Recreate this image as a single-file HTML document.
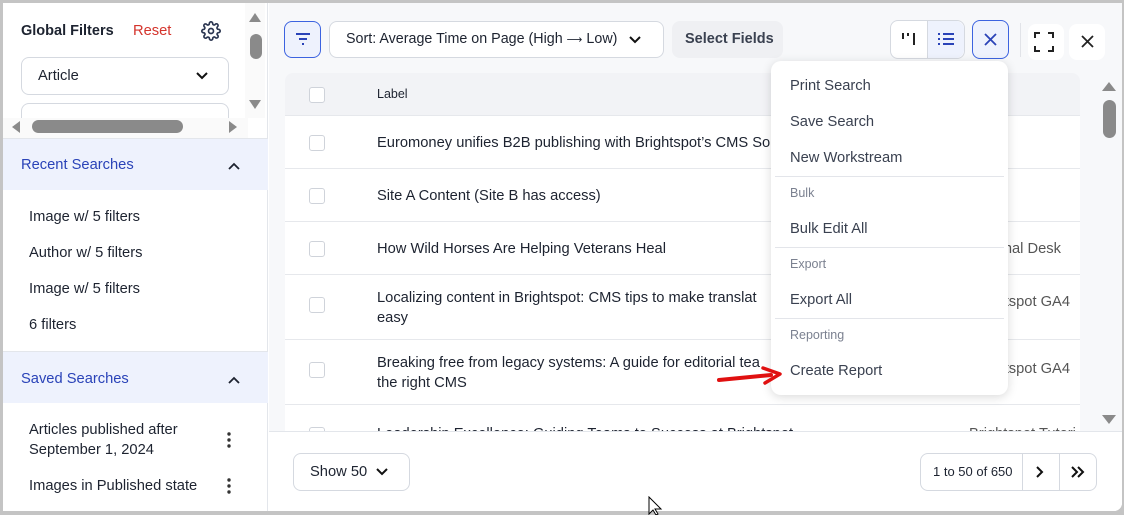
<!DOCTYPE html>
<html><head><meta charset="utf-8"><style>
*{box-sizing:border-box;margin:0;padding:0}
body{width:1124px;height:515px;background:#c4c4c4;font-family:"Liberation Sans","Noto Sans CJK JP",sans-serif;color:#1d2330;position:relative;overflow:hidden;font-size:14px;line-height:20px}
.win{position:absolute;left:3px;top:3px;width:1119px;height:508px;background:#fff;border-radius:0 0 8px 0;overflow:hidden}
.a{position:absolute}
.side{left:0;top:0;width:265px;height:508px;background:#fff;border-right:1px solid #e3e6eb}
.main{left:266px;top:0;width:853px;height:428px;background:#f7f8fa}
.sec{background:#eef2fd;color:#2a43b8;font-size:14.7px}
.item{font-size:14.7px;color:#1d2330}
.btn{border:1px solid #d5d9e0;border-radius:8px;background:#fff}
.cb{width:16px;height:16px;border:1px solid #cfd3da;border-radius:3px;background:#fff}
.row{left:282px;width:795px;border-top:1px solid #e6e8ec;background:#fff}
.rt{font-size:14.7px;color:#1d2330;line-height:20px}
.rr{position:absolute;right:10px;font-size:14.7px;color:#555}
.menu{left:768px;top:58px;width:237px;height:334px;background:#fff;border-radius:10px;box-shadow:0 2px 10px rgba(0,0,0,.15)}
.mi{position:absolute;left:19px;font-size:14.7px;color:#3a4150}
.mh{position:absolute;left:19px;font-size:12.5px;color:#7b8190}
.hr{position:absolute;left:4px;width:229px;height:1px;background:#e3e5ea}
</style></head><body>
<div class="win">
 <div class="a side">
  <div class="a" style="left:18px;top:18px;font-weight:bold;font-size:14.5px">Global Filters</div>
  <div class="a" style="left:130px;top:18px;color:#d4342c;font-size:14.7px">Reset</div>
  <svg class="a" style="left:198px;top:18px" width="20" height="20" viewBox="0 0 24 24" fill="none" stroke="#2a3550" stroke-width="2"><circle cx="12" cy="12" r="3"/><path d="M19.4 15a1.7 1.7 0 0 0 .3 1.8l.1.1a2 2 0 1 1-2.8 2.8l-.1-.1a1.7 1.7 0 0 0-1.8-.3 1.7 1.7 0 0 0-1 1.5V21a2 2 0 1 1-4 0v-.1a1.7 1.7 0 0 0-1.1-1.5 1.7 1.7 0 0 0-1.8.3l-.1.1a2 2 0 1 1-2.8-2.8l.1-.1a1.7 1.7 0 0 0 .3-1.8 1.7 1.7 0 0 0-1.5-1H3a2 2 0 1 1 0-4h.1a1.7 1.7 0 0 0 1.5-1.1 1.7 1.7 0 0 0-.3-1.8l-.1-.1a2 2 0 1 1 2.8-2.8l.1.1a1.7 1.7 0 0 0 1.8.3H9a1.7 1.7 0 0 0 1-1.5V3a2 2 0 1 1 4 0v.1a1.7 1.7 0 0 0 1 1.5 1.7 1.7 0 0 0 1.8-.3l.1-.1a2 2 0 1 1 2.8 2.8l-.1.1a1.7 1.7 0 0 0-.3 1.8V9a1.7 1.7 0 0 0 1.5 1H21a2 2 0 1 1 0 4h-.1a1.7 1.7 0 0 0-1.5 1z"/></svg>
  <div class="a btn" style="left:18px;top:54px;width:208px;height:38px"></div>
  <div class="a" style="left:35px;top:63px;font-size:14.7px">Article</div>
  <svg class="a" style="left:192px;top:68px" width="14" height="10" viewBox="0 0 14 10"><path d="M2 2l5 5 5-5" fill="none" stroke="#111" stroke-width="2"/></svg>
  <div class="a btn" style="left:18px;top:100px;width:208px;height:30px;border-bottom:none;border-radius:8px 8px 0 0"></div>
  <div class="a" style="left:0;top:115px;width:245px;height:22px;background:#fafafa"></div>
  <div class="a" style="left:242px;top:0;width:20px;height:115px;background:#fafafa"></div>
  <svg class="a" style="left:245px;top:8px" width="14" height="12"><path d="M1 11L7 2l6 9z" fill="#8a8a8a"/></svg>
  <div class="a" style="left:247px;top:31px;width:12px;height:25px;border-radius:6px;background:#8a8a8a"></div>
  <svg class="a" style="left:245px;top:96px" width="14" height="12"><path d="M1 1l6 9 6-9z" fill="#8a8a8a"/></svg>
  <svg class="a" style="left:8px;top:117px" width="10" height="14"><path d="M9 1L1 7l8 6z" fill="#8a8a8a"/></svg>
  <div class="a" style="left:29px;top:117px;width:151px;height:13px;border-radius:7px;background:#8a8a8a"></div>
  <svg class="a" style="left:225px;top:117px" width="10" height="14"><path d="M1 1l8 6-8 6z" fill="#8a8a8a"/></svg>
  <div class="a sec" style="left:0;top:135px;width:265px;height:52px;border-top:1px solid #e3e6eb"><div class="a" style="left:18px;top:16px">Recent Searches</div>
   <svg class="a" style="left:224px;top:22px" width="14" height="10"><path d="M2 8l5-5 5 5" fill="none" stroke="#1d2330" stroke-width="1.8"/></svg></div>
  <div class="a item" style="left:26px;top:204px">Image w/ 5 filters</div>
  <div class="a item" style="left:26px;top:240px">Author w/ 5 filters</div>
  <div class="a item" style="left:26px;top:276px">Image w/ 5 filters</div>
  <div class="a item" style="left:26px;top:312px">6 filters</div>
  <div class="a sec" style="left:0;top:348px;width:265px;height:52px;border-top:1px solid #e3e6eb"><div class="a" style="left:18px;top:17px">Saved Searches</div>
   <svg class="a" style="left:224px;top:23px" width="14" height="10"><path d="M2 8l5-5 5 5" fill="none" stroke="#1d2330" stroke-width="1.8"/></svg></div>
  <div class="a item" style="left:26px;top:417px;line-height:20px">Articles published after<br>September 1, 2024</div>
  <div class="a item" style="left:26px;top:473px">Images in Published state</div>
  <svg class="a" style="left:224px;top:429px" width="4" height="16"><circle cx="2" cy="2" r="1.7" fill="#333"/><circle cx="2" cy="8" r="1.7" fill="#333"/><circle cx="2" cy="14" r="1.7" fill="#333"/></svg>
  <svg class="a" style="left:224px;top:475px" width="4" height="16"><circle cx="2" cy="2" r="1.7" fill="#333"/><circle cx="2" cy="8" r="1.7" fill="#333"/><circle cx="2" cy="14" r="1.7" fill="#333"/></svg>
 </div>
 <div class="a main"></div>
 <!-- toolbar -->
 <div class="a" style="left:281px;top:18px;width:37px;height:37px;border:1px solid #3c63e0;border-radius:8px;background:#eef2fd"></div>
 <svg class="a" style="left:291px;top:28px" width="18" height="16"><path d="M2 3h14M5 8h8M8 13h2" stroke="#2a43b8" stroke-width="2"/></svg>
 <div class="a btn" style="left:326px;top:18px;width:335px;height:37px"></div>
 <div class="a" style="left:343px;top:26px;font-size:14.3px;white-space:nowrap">Sort: Average Time on Page (High <span style="font-family:'DejaVu Sans';font-size:11px">⟶</span> Low)</div>
 <svg class="a" style="left:625px;top:32px" width="14" height="10"><path d="M2 2l5 5 5-5" fill="none" stroke="#111" stroke-width="2"/></svg>
 <div class="a" style="left:669px;top:18px;width:111px;height:37px;border-radius:8px;background:#eff0f3"></div>
 <div class="a" style="left:682px;top:26px;font-size:14.5px;font-weight:bold;color:#3a4150">Select Fields</div>
 <div class="a btn" style="left:887px;top:17px;width:75px;height:39px"></div>
 <div class="a" style="left:924px;top:18px;width:37px;height:37px;background:#eef2fd;border-left:1px solid #d5d9e0;border-radius:0 8px 8px 0"></div>
 <svg class="a" style="left:898px;top:28px" width="16" height="16"><path d="M2 2v6M7 2v3M13 2v12" stroke="#222" stroke-width="2"/></svg>
 <svg class="a" style="left:934px;top:29px" width="18" height="14"><path d="M1 2h2M1 7h2M1 12h2M6 2h11M6 7h11M6 12h11" stroke="#2a43b8" stroke-width="2"/></svg>
 <div class="a" style="left:969px;top:17px;width:37px;height:39px;border:1px solid #3c63e0;border-radius:8px;background:#eef2fd"></div>
 <svg class="a" style="left:980px;top:29px" width="15" height="15"><path d="M2 2l11 11M13 2L2 13" stroke="#2a43b8" stroke-width="1.8"/></svg>
 <div class="a" style="left:1017px;top:20px;width:1px;height:34px;background:#e1e3e8"></div>
 <div class="a" style="left:1025px;top:21px;width:36px;height:36px;border-radius:8px;background:#fff"></div>
 <svg class="a" style="left:1031px;top:29px" width="20" height="20"><path d="M1 6V1h5M14 1h5v5M19 14v5h-5M6 19H1v-5" fill="none" stroke="#222" stroke-width="2"/></svg>
 <div class="a" style="left:1066px;top:21px;width:36px;height:36px;border-radius:8px;background:#fff"></div>
 <svg class="a" style="left:1077px;top:31px" width="15" height="15"><path d="M2 2l11 11M13 2L2 13" stroke="#222" stroke-width="1.8"/></svg>
 <!-- table -->
 <div class="a" style="left:282px;top:70px;width:795px;height:42px;background:#f2f3f6;border-radius:8px 8px 0 0"></div>
 <div class="a cb" style="left:306px;top:84px"></div>
 <div class="a" style="left:374px;top:81px;font-size:12.5px">Label</div>
 <div class="a row" style="top:112px;height:53px"><div class="a cb" style="left:24px;top:19px"></div><div class="a rt" style="left:92px;top:17px">Euromoney unifies B2B publishing with Brightspot’s CMS So</div></div>
 <div class="a row" style="top:165px;height:53px"><div class="a cb" style="left:24px;top:19px"></div><div class="a rt" style="left:92px;top:17px">Site A Content (Site B has access)</div></div>
 <div class="a row" style="top:218px;height:53px"><div class="a cb" style="left:24px;top:19px"></div><div class="a rt" style="left:92px;top:17px">How Wild Horses Are Helping Veterans Heal</div><div class="rr" style="top:17px;right:19px">nal Desk</div></div>
 <div class="a row" style="top:271px;height:65px"><div class="a cb" style="left:24px;top:22px"></div><div class="a rt" style="left:92px;top:13px">Localizing content in Brightspot: CMS tips to make translat<br>easy</div><div class="rr" style="top:17px">tspot GA4</div></div>
 <div class="a row" style="top:336px;height:65px"><div class="a cb" style="left:24px;top:22px"></div><div class="a rt" style="left:92px;top:13px">Breaking free from legacy systems: A guide for editorial tea<br>the right CMS</div><div class="rr" style="top:19px">tspot GA4</div></div>
 <div class="a row" style="top:401px;height:27px;overflow:hidden"><div class="a cb" style="left:24px;top:22px"></div><div class="a rt" style="left:92px;top:19px">Leadership Excellence: Guiding Teams to Success at Brightspot</div><div class="a rt" style="left:684px;top:19px;color:#555;white-space:nowrap">Brightspot Tutori</div></div>
 <div class="a" style="left:1078px;top:70px;width:41px;height:358px;background:#f7f8fa"></div>
 <svg class="a" style="left:1098px;top:77px" width="16" height="12"><path d="M1 11L8 2l7 9z" fill="#8a8a8a"/></svg>
 <div class="a" style="left:1100px;top:97px;width:13px;height:38px;border-radius:7px;background:#8a8a8a"></div>
 <svg class="a" style="left:1098px;top:411px" width="16" height="12"><path d="M1 1l7 9 7-9z" fill="#8a8a8a"/></svg>
 <!-- footer -->
 <div class="a" style="left:266px;top:428px;width:853px;height:80px;background:#fff;border-top:1px solid #e3e6eb"></div>
 <div class="a btn" style="left:290px;top:450px;width:117px;height:38px"></div>
 <div class="a" style="left:307px;top:459px;font-size:14.7px">Show 50</div>
 <svg class="a" style="left:372px;top:464px" width="14" height="10"><path d="M2 2l5 5 5-5" fill="none" stroke="#111" stroke-width="2"/></svg>
 <div class="a btn" style="left:917px;top:450px;width:177px;height:38px"></div>
 <div class="a" style="left:1019px;top:451px;width:1px;height:36px;background:#d5d9e0"></div>
 <div class="a" style="left:1056px;top:451px;width:1px;height:36px;background:#d5d9e0"></div>
 <div class="a" style="left:930px;top:459px;font-size:13px">1 to 50 of 650</div>
 <svg class="a" style="left:1032px;top:462px" width="10" height="14"><path d="M2 2l5 5-5 5" fill="none" stroke="#111" stroke-width="2"/></svg>
 <svg class="a" style="left:1067px;top:462px" width="16" height="14"><path d="M2 2l5 5-5 5M8 2l5 5-5 5" fill="none" stroke="#111" stroke-width="2"/></svg>
 <!-- menu -->
 <div class="a menu">
  <div class="mi" style="top:15px">Print Search</div>
  <div class="mi" style="top:51px">Save Search</div>
  <div class="mi" style="top:87px">New Workstream</div>
  <div class="hr" style="top:115px"></div>
  <div class="mh" style="top:122px">Bulk</div>
  <div class="mi" style="top:158px">Bulk Edit All</div>
  <div class="hr" style="top:186px"></div>
  <div class="mh" style="top:193px">Export</div>
  <div class="mi" style="top:229px">Export All</div>
  <div class="hr" style="top:257px"></div>
  <div class="mh" style="top:264px">Reporting</div>
  <div class="mi" style="top:300px">Create Report</div>
 </div>
 <svg class="a" style="left:714px;top:362px" width="66" height="22"><path d="M2 15L54 10" stroke="#e01010" stroke-width="4" stroke-linecap="round"/><path d="M46 3L63 9 48 18" fill="none" stroke="#e01010" stroke-width="3.5" stroke-linecap="round" stroke-linejoin="round"/></svg>
</div>
<svg class="a" style="left:648px;top:496px" width="16" height="19"><path d="M1 1v17l4-4 3 5 2-1-3-5h6z" fill="#fff" stroke="#000"/></svg>
</body></html>
